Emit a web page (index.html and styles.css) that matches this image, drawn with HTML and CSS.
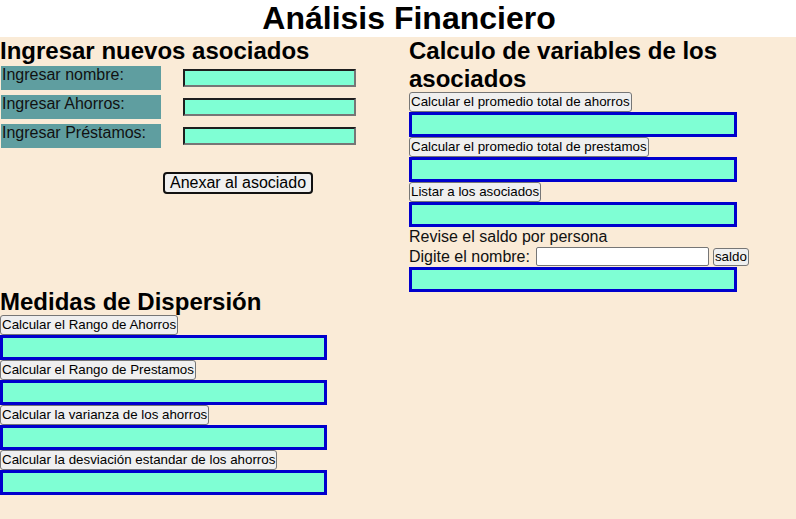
FILE: index.html
```html
<!DOCTYPE html>
<html lang="es">
<head>
<meta charset="utf-8">
<title>Análisis Financiero</title>
<link rel="stylesheet" href="styles.css">
</head>
<body>
<h1 class="title">Análisis Financiero</h1>
<main class="page">
  <div class="col-left">
    <section class="ingreso">
      <h2 class="heading">Ingresar nuevos asociados</h2>
      <div class="fields">
        <div class="field"><span class="label">Ingresar nombre:</span><input class="in" type="text"></div>
        <div class="field"><span class="label">Ingresar Ahorros:</span><input class="in" type="text"></div>
        <div class="field"><span class="label">Ingresar Préstamos:</span><input class="in" type="text"></div>
      </div>
      <button class="anexar">Anexar al asociado</button>
    </section>
    <section class="dispersion">
      <h2 class="heading">Medidas de Dispersión</h2>
      <div class="stack">
        <button class="btn">Calcular el Rango de Ahorros</button>
        <div class="out out-left"></div>
        <button class="btn">Calcular el Rango de Prestamos</button>
        <div class="out out-left"></div>
        <button class="btn">Calcular la varianza de los ahorros</button>
        <div class="out out-left"></div>
        <button class="btn">Calcular la desviación estandar de los ahorros</button>
        <div class="out out-left"></div>
      </div>
    </section>
  </div>
  <section class="col-right">
    <h2 class="heading">Calculo de variables de los asociados</h2>
    <div class="stack">
      <button class="btn">Calcular el promedio total de ahorros</button>
      <div class="out"></div>
      <button class="btn">Calcular el promedio total de prestamos</button>
      <div class="out"></div>
      <button class="btn">Listar a los asociados</button>
      <div class="out"></div>
      <div class="text">Revise el saldo por persona</div>
      <div class="saldo-row">
        <span class="text">Digite el nombre:</span>
        <input class="name-in" type="text">
        <button class="btn btn-saldo">saldo</button>
      </div>
      <div class="out"></div>
    </div>
  </section>
</main>
</body>
</html>
```

FILE: styles.css
```css
html, body {
  margin: 0;
  padding: 0;
  background: #ffffff;
  font-family: "Liberation Sans", Arial, sans-serif;
  color: #000;
}

.title {
  margin: 0;
  padding-left: 22px;
  font-size: 32px;
  font-weight: bold;
  text-align: center;
  line-height: 37px;
  height: 37px;
}

.page {
  background: #faebd7;
  min-height: calc(100vh - 37px);
  display: grid;
  grid-template-columns: 409px 1fr;
  align-items: start;
}

.heading {
  margin: 0;
  font-size: 24px;
  font-weight: bold;
  line-height: 27.5px;
}

.col-left {
  display: flex;
  flex-direction: column;
}

.fields {
  display: flex;
  flex-direction: column;
  gap: 5px;
  padding-top: 1px;
}

.field {
  display: flex;
  align-items: center;
  height: 24px;
}

.label {
  box-sizing: border-box;
  width: 160px;
  height: 24px;
  margin-left: 1px;
  padding-left: 1px;
  background: #5f9ea0;
  color: #111;
  font-size: 16px;
  line-height: 18px;
}

.in {
  box-sizing: border-box;
  width: 173px;
  height: 18px;
  margin: 0 0 0 22px;
  padding: 0;
  background: #7fffd4;
  border-style: solid;
  border-width: 2px;
  border-color: #1e1e1e #767676 #767676 #1e1e1e;
}

.anexar {
  align-self: flex-start;
  margin: 24px 0 0 163px;
  box-sizing: border-box;
  width: 150px;
  height: 22px;
  padding: 0;
  font-family: "Liberation Sans", Arial, sans-serif;
  font-size: 16px;
  line-height: 18px;
  color: #000;
  background: #f0f0f0;
  border: 2px solid #111;
  border-radius: 4px;
}

.dispersion {
  margin-top: 94px;
}

.stack {
  display: flex;
  flex-direction: column;
  align-items: flex-start;
}

.btn {
  box-sizing: border-box;
  height: 20px;
  margin: 0;
  padding: 0 1px;
  font-family: "Liberation Sans", Arial, sans-serif;
  font-size: 13.33px;
  line-height: 16px;
  color: #000;
  background: #efefef;
  border: 1px solid #767676;
  border-radius: 3px;
}

.out {
  box-sizing: border-box;
  width: 328px;
  height: 25px;
  background: #7fffd4;
  border: 3px solid #0000cd;
}

.out-left {
  width: 327px;
}

.text {
  font-size: 16px;
  line-height: 19px;
  color: #111;
}

.saldo-row {
  display: flex;
  align-items: center;
  height: 21px;
}

.name-in {
  box-sizing: border-box;
  width: 173px;
  height: 19px;
  margin: 0 0 0 6px;
  padding: 0;
  background: #fff;
  border: 1px solid #767676;
  border-radius: 2px;
}

.btn-saldo {
  height: 18px;
  margin-left: 4px;
  line-height: 15px;
}
```
